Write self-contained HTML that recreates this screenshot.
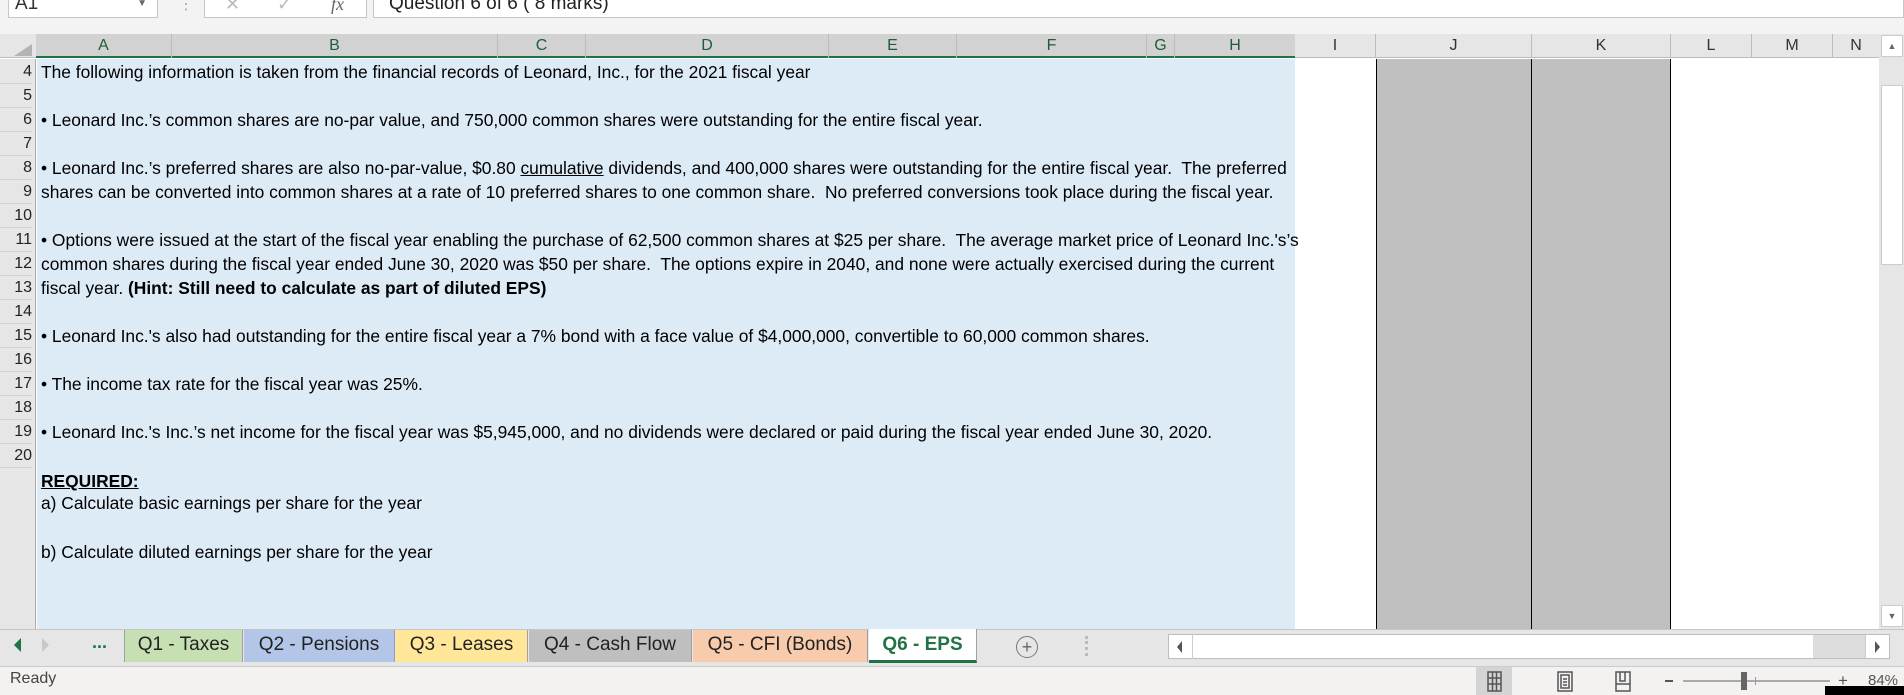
<!DOCTYPE html>
<html><head><meta charset="utf-8"><style>
*{margin:0;padding:0;box-sizing:border-box}
body{width:1904px;height:695px;overflow:hidden;background:#fff;font-family:"Liberation Sans",sans-serif;position:relative}
.a{position:absolute}
.t{position:absolute;left:41px;font-size:17.4px;color:#000;white-space:nowrap;line-height:22px}
.rn{position:absolute;left:0;width:32px;text-align:right;font-size:16px;color:#222;line-height:24px;height:24px;border-bottom:1px solid #d4d4d4}
.ch{position:absolute;top:34px;height:24px;font-size:16px;line-height:24px;text-align:center;border-right:1px solid #bcbcbc}
.tab{position:absolute;top:630px;height:32px;font-size:19px;line-height:30px;text-align:center;color:#222;border-right:1px solid #a0a0a0}
</style></head><body>
<div class="a" style="left:0;top:0;width:1904px;height:34px;background:#f3f3f3"></div>
<div class="a" style="left:8px;top:-10px;width:150px;height:28px;background:#fff;border:1px solid #c6c6c6;font-size:19px;line-height:26px;padding-left:6px;color:#333">A1<span style="position:absolute;right:10px;font-size:10px;color:#666">▼</span></div>
<div class="a" style="left:178px;top:-6px;font-size:16px;color:#aaa">⋮</div>
<div class="a" style="left:204px;top:-10px;width:163px;height:28px;background:#fff;border:1px solid #c6c6c6;font-size:18px;line-height:26px;color:#bbb"><span style="position:absolute;left:20px">✕</span><span style="position:absolute;left:72px">✓</span><span style="position:absolute;left:126px;font-style:italic;font-family:'Liberation Serif',serif;color:#666">fx</span></div>
<div class="a" style="left:373px;top:-10px;width:1531px;height:28px;background:#fff;border:1px solid #c6c6c6;font-size:19px;line-height:26px;padding-left:15px;color:#222">Question 6 of 6 ( 8 marks)</div>
<div class="a" style="left:0;top:34px;width:1879px;height:24px;background:#e6e6e6;border-bottom:1px solid #bcbcbc"></div>
<div class="a" style="left:36px;top:34px;width:1259px;height:24px;background:#d2d2d2;border-bottom:2px solid #217346"></div>
<div class="a" style="left:14px;top:44px;width:0;height:0;border-left:18px solid transparent;border-bottom:12px solid #b4b4b4"></div>
<div class="ch" style="left:36px;width:136px;color:#1e5e38">A</div>
<div class="ch" style="left:172px;width:326px;color:#1e5e38">B</div>
<div class="ch" style="left:498px;width:88px;color:#1e5e38">C</div>
<div class="ch" style="left:586px;width:243px;color:#1e5e38">D</div>
<div class="ch" style="left:829px;width:128px;color:#1e5e38">E</div>
<div class="ch" style="left:957px;width:190px;color:#1e5e38">F</div>
<div class="ch" style="left:1147px;width:28px;color:#1e5e38">G</div>
<div class="ch" style="left:1175px;width:120px;color:#1e5e38;border-right:none">H</div>
<div class="ch" style="left:1295px;width:81px;color:#333">I</div>
<div class="ch" style="left:1376px;width:156px;color:#333">J</div>
<div class="ch" style="left:1532px;width:139px;color:#333">K</div>
<div class="ch" style="left:1671px;width:81px;color:#333">L</div>
<div class="ch" style="left:1752px;width:81px;color:#333">M</div>
<div class="ch" style="left:1833px;width:46px;color:#333;border-right:none">N</div>
<div class="a" style="left:0;top:59px;width:36px;height:571px;background:#e6e6e6;border-right:1px solid #a8a8a8"></div>
<div class="rn" style="top:60px">4</div><div class="rn" style="top:84px">5</div><div class="rn" style="top:108px">6</div><div class="rn" style="top:132px">7</div><div class="rn" style="top:156px">8</div><div class="rn" style="top:180px">9</div><div class="rn" style="top:204px">10</div><div class="rn" style="top:228px">11</div><div class="rn" style="top:252px">12</div><div class="rn" style="top:276px">13</div><div class="rn" style="top:300px">14</div><div class="rn" style="top:324px">15</div><div class="rn" style="top:348px">16</div><div class="rn" style="top:372px">17</div><div class="rn" style="top:396px">18</div><div class="rn" style="top:420px">19</div><div class="rn" style="top:444px">20</div>
<div class="a" style="left:37px;top:59px;width:1258px;height:571px;background:#ddebf7"></div>
<div class="a" style="left:1376px;top:59px;width:295px;height:571px;background:#c0c0c0;border-left:1px solid #000;border-right:1px solid #000"></div>
<div class="a" style="left:1531px;top:59px;width:1px;height:571px;background:#000"></div>
<div class="a" style="left:1879px;top:34px;width:25px;height:596px;background:#e6e6e6"></div>
<div class="a" style="left:1881px;top:35px;width:22px;height:22px;background:#fff;border:1px solid #ccc;font-size:9px;color:#666;text-align:center;line-height:20px">▲</div>
<div class="a" style="left:1881px;top:85px;width:22px;height:180px;background:#fff;border:1px solid #ccc"></div>
<div class="a" style="left:1881px;top:605px;width:22px;height:22px;background:#fff;border:1px solid #ccc;font-size:9px;color:#666;text-align:center;line-height:20px">▼</div>
<div class="t" style="top:61px">The following information is taken from the financial records of Leonard, Inc., for the 2021 fiscal year</div>
<div class="t" style="top:109px">• Leonard Inc.’s common shares are no-par value, and 750,000 common shares were outstanding for the entire fiscal year.</div>
<div class="t" style="top:157px">• Leonard Inc.’s preferred shares are also no-par-value, $0.80 <u>cumulative</u> dividends, and 400,000 shares were outstanding for the entire fiscal year.&nbsp; The preferred</div>
<div class="t" style="top:181px">shares can be converted into common shares at a rate of 10 preferred shares to one common share.&nbsp; No preferred conversions took place during the fiscal year.</div>
<div class="t" style="top:229px">• Options were issued at the start of the fiscal year enabling the purchase of 62,500 common shares at $25 per share.&nbsp; The average market price of Leonard Inc.'s’s</div>
<div class="t" style="top:253px">common shares during the fiscal year ended June 30, 2020 was $50 per share.&nbsp; The options expire in 2040, and none were actually exercised during the current</div>
<div class="t" style="top:277px">fiscal year. <b>(Hint: Still need to calculate as part of diluted EPS)</b></div>
<div class="t" style="top:325px">• Leonard Inc.'s also had outstanding for the entire fiscal year a 7% bond with a face value of $4,000,000, convertible to 60,000 common shares.</div>
<div class="t" style="top:373px">• The income tax rate for the fiscal year was 25%.</div>
<div class="t" style="top:421px">• Leonard Inc.'s Inc.’s net income for the fiscal year was $5,945,000, and no dividends were declared or paid during the fiscal year ended June 30, 2020.</div>
<div class="t" style="top:470px"><b><u>REQUIRED:</u></b></div>
<div class="t" style="top:492px">a) Calculate basic earnings per share for the year</div>
<div class="t" style="top:541px">b) Calculate diluted earnings per share for the year</div>
<div class="a" style="left:0;top:629px;width:1904px;height:37px;background:#e6e6e6;border-top:1px solid #c6c6c6"></div>
<div class="a" style="left:14px;top:638px;width:0;height:0;border-top:7px solid transparent;border-bottom:7px solid transparent;border-right:7px solid #217346"></div>
<div class="a" style="left:42px;top:638px;width:0;height:0;border-top:7px solid transparent;border-bottom:7px solid transparent;border-left:7px solid #c8c8c8"></div>
<div class="a" style="left:92px;top:632px;font-size:18px;font-weight:bold;color:#217346">...</div>
<div class="tab" style="left:124px;width:119px;background:#c6e0b4;border-left:1px solid #a0a0a0">Q1 - Taxes</div>
<div class="tab" style="left:244px;width:151px;background:#b4c6e7">Q2 - Pensions</div>
<div class="tab" style="left:396px;width:132px;background:#ffe699">Q3 - Leases</div>
<div class="tab" style="left:529px;width:163px;background:#bfbfbf">Q4 - Cash Flow</div>
<div class="tab" style="left:693px;width:175px;background:#f8cbad">Q5 - CFI (Bonds)</div>
<div class="tab" style="left:869px;top:629px;height:34px;width:108px;background:#fff;color:#217346;font-weight:bold;border-bottom:3px solid #217346;line-height:32px">Q6 - EPS</div>
<div class="a" style="left:1016px;top:636px;width:22px;height:22px;border:1px solid #777;border-radius:50%;text-align:center;line-height:20px;font-size:18px;color:#666">+</div>
<div class="a" style="left:1085px;top:636px;width:3px;height:20px;border-left:3px dotted #bbb"></div>
<div class="a" style="left:1168px;top:634px;width:722px;height:25px;background:#fff;border:1px solid #bdbdbd"></div>
<div class="a" style="left:1168px;top:634px;width:25px;height:25px;border-right:1px solid #ccc"></div>
<div class="a" style="left:1177px;top:641px;width:0;height:0;border-top:6px solid transparent;border-bottom:6px solid transparent;border-right:5px solid #555"></div>
<div class="a" style="left:1813px;top:635px;width:52px;height:23px;background:#ddd"></div>
<div class="a" style="left:1865px;top:635px;width:1px;height:23px;background:#ccc"></div>
<div class="a" style="left:1875px;top:641px;width:0;height:0;border-top:6px solid transparent;border-bottom:6px solid transparent;border-left:5px solid #555"></div>
<div class="a" style="left:0;top:666px;width:1904px;height:29px;background:#f3f2f1;border-top:1px solid #ccc"></div>
<div class="a" style="left:10px;top:670px;font-size:16px;color:#444">Ready</div>
<div class="a" style="left:1476px;top:667px;width:36px;height:28px;background:#d4d4d4"></div>
<svg class="a" style="left:1480px;top:670px" width="30" height="24" viewBox="0 0 30 24"><g stroke="#555" fill="none" stroke-width="1.5"><rect x="8" y="2" width="13" height="19"/><path d="M8 8H21M8 14H21M12.5 2V21M16.5 2V21"/></g></svg>
<svg class="a" style="left:1555px;top:670px" width="30" height="24" viewBox="0 0 30 24"><g stroke="#555" fill="none" stroke-width="1.5"><rect x="3" y="2" width="14" height="19"/><rect x="6" y="5" width="8" height="13"/><path d="M8 9h4M8 12h4M8 15h4"/></g></svg>
<svg class="a" style="left:1613px;top:670px" width="30" height="24" viewBox="0 0 30 24"><g stroke="#555" fill="none" stroke-width="1.5"><rect x="3" y="2" width="14" height="19"/><path d="M3 14H17M7 2V11H12V2"/></g></svg>
<div class="a" style="left:1665px;top:680px;width:8px;height:2px;background:#555"></div>
<div class="a" style="left:1683px;top:680px;width:147px;height:2px;background:#aaa"></div>
<div class="a" style="left:1741px;top:672px;width:6px;height:18px;background:#666"></div>
<div class="a" style="left:1755px;top:677px;width:1px;height:8px;background:#999"></div>
<div class="a" style="left:1838px;top:671px;font-size:17px;color:#555">+</div>
<div class="a" style="left:1868px;top:672px;font-size:15px;color:#555">84%</div>
<div class="a" style="left:1825px;top:686px;width:79px;height:9px;background:#000"></div>
</body></html>
